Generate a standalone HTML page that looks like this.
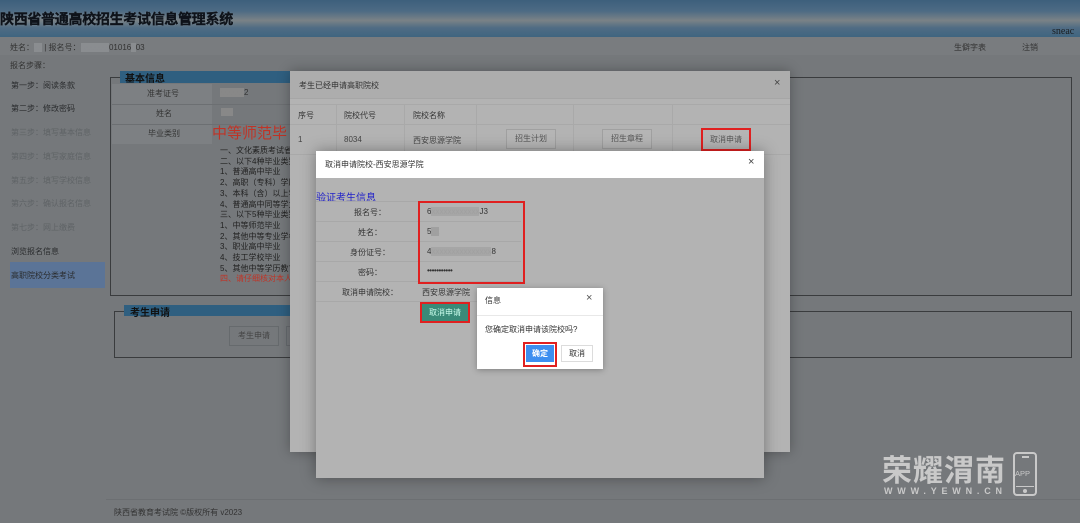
<!DOCTYPE html>
<html><head><meta charset="utf-8"><style>
*{margin:0;padding:0;box-sizing:border-box}
body{width:1080px;height:523px;overflow:hidden;background:#75787b;font-family:"Liberation Sans","Noto Sans CJK SC",sans-serif;font-size:8px;color:#222;position:relative}
.a{position:absolute;white-space:nowrap}
.hdr{left:0;top:0;width:1080px;height:37px;background:linear-gradient(#3d5f7c 0%,#4d6b84 30%,#7a8286 55%,#506c84 75%,#3f6580 100%)}
.side{left:11px;color:#2a2c2e;font-size:8px}
.side.dim{color:#5f6366}
.red{color:#c03326}
.m1{left:290px;top:71px;width:500px;height:381px;background:#b3b3b3;box-shadow:0 0 12px rgba(0,0,0,.3)}
.m2{left:316px;top:151px;width:448px;height:327px;background:#b3b3b3;box-shadow:0 0 14px rgba(0,0,0,.35)}
.btn{border:1px solid #a0a0a0;background:#b5b5b5;color:#555;font-size:8px;text-align:center}
.rb{border:2px solid #e02020}
</style></head><body>
<div class="a hdr"></div>
<div class="a" style="left:0;top:9px;font-size:14px;font-weight:bold;color:#0e131a;letter-spacing:-.3px;-webkit-text-stroke:0.4px #0e131a;text-shadow:0 0 1px #9ab"><span>陕西省普通高校招生考试信息管理系统</span></div>
<div class="a" style="left:1052px;top:26px;font-family:'Liberation Serif',serif;font-size:10px;color:#1a1d20">sneac</div>
<div class="a" style="left:0;top:37px;width:1080px;height:18px;background:#797c7f"></div>
<div class="a" style="left:10px;top:42px;color:#333">姓名：<span style="background:#8a8d90;color:#8a8d90">xx</span> | 报名号：<span style="background:#8a8d90;color:#8a8d90">6xxxxxx</span>01016<span style="background:#8a8d90;color:#8a8d90">0</span>03</div>
<div class="a" style="left:954px;top:42px;color:#333">生僻字表</div>
<div class="a" style="left:1022px;top:42px;color:#333">注销</div>
<div class="a" style="left:10px;top:60px;color:#333">报名步骤：</div>
<div class="a side" style="top:80px">第一步：阅读条款</div>
<div class="a side" style="top:103px">第二步：修改密码</div>
<div class="a side dim" style="top:127px">第三步：填写基本信息</div>
<div class="a side dim" style="top:151px">第四步：填写家庭信息</div>
<div class="a side dim" style="top:175px">第五步：填写学校信息</div>
<div class="a side dim" style="top:198px">第六步：确认报名信息</div>
<div class="a side dim" style="top:222px">第七步：网上缴费</div>
<div class="a side" style="top:246px">浏览报名信息</div>
<div class="a" style="left:10px;top:262px;width:95px;height:26px;background:#5b7497"></div>
<div class="a side" style="top:270px">高职院校分类考试</div>
<!-- fieldset 1 -->
<div class="a" style="left:110px;top:77px;width:962px;height:219px;border:1px solid #3a3c3e"></div>
<div class="a" style="left:120px;top:71px;width:170px;height:12px;background:#2f5f80"></div>
<div class="a" style="left:125px;top:70px;font-size:10px;font-weight:bold;color:#111">基本信息</div>
<div class="a" style="left:112px;top:84px;width:100px;height:60px;background:#7d8083"></div>
<div class="a" style="left:112px;top:104px;width:180px;height:1px;background:#6c6f72"></div>
<div class="a" style="left:112px;top:124px;width:180px;height:1px;background:#6c6f72"></div>
<div class="a" style="left:147px;top:88px;color:#333">准考证号</div>
<div class="a" style="left:156px;top:108px;color:#333">姓名</div>
<div class="a" style="left:148px;top:128px;color:#333">毕业类别</div>
<div class="a" style="left:220px;top:88px;color:#333"><span style="background:#888;color:#888">xxxxxx</span>2</div>
<div class="a" style="left:221px;top:108px;width:12px;height:8px;background:#888"></div>
<div class="a red" style="left:212px;top:122px;font-size:15px">中等师范毕</div>
<div class="a" style="left:220px;top:146px;line-height:10.7px;font-size:8px;color:#222">一、文化素质考试省级<br>二、以下4种毕业类别<br>1、普通高中毕业<br>2、高职（专科）学历<br>3、本科（含）以上学<br>4、普通高中同等学力<br>三、以下5种毕业类别<br>1、中等师范毕业<br>2、其他中等专业学校<br>3、职业高中毕业<br>4、技工学校毕业<br>5、其他中等学历教育<br><span class="red">四、请仔细核对本人毕</span></div>
<!-- fieldset 2 -->
<div class="a" style="left:114px;top:311px;width:958px;height:47px;border:1px solid #3a3c3e"></div>
<div class="a" style="left:124px;top:305px;width:166px;height:11px;background:#2f5f80"></div>
<div class="a" style="left:130px;top:304px;font-size:10px;font-weight:bold;color:#111">考生申请</div>
<div class="a" style="left:229px;top:326px;width:50px;height:20px;border:1px solid #666a6d;color:#444;text-align:center;line-height:18px">考生申请</div>
<div class="a" style="left:286px;top:326px;width:8px;height:20px;border:1px solid #666a6d"></div>
<div class="a" style="left:106px;top:499px;width:974px;height:1px;background:#6c6f72"></div>
<div class="a" style="left:114px;top:507px;color:#333">陕西省教育考试院 ©版权所有 v2023</div>
<!-- modal 1 -->
<div class="a m1">
 <div class="a" style="left:0;top:0;width:500px;height:28px;background:#adadad;border-bottom:1px solid #a6a6a6"></div>
 <div class="a" style="left:9px;top:9px;color:#333">考生已经申请高职院校</div>
 <div class="a" style="left:484px;top:6px;font-size:11px;color:#444">×</div>
 <div class="a" style="left:0;top:33px;width:500px;height:1px;background:#a9a9a9"></div>
 <div class="a" style="left:0;top:53px;width:500px;height:1px;background:#a9a9a9"></div>
 <div class="a" style="left:0;top:83px;width:500px;height:1px;background:#a9a9a9"></div>
 <div class="a" style="left:46px;top:33px;width:1px;height:50px;background:#a9a9a9"></div>
 <div class="a" style="left:114px;top:33px;width:1px;height:50px;background:#a9a9a9"></div>
 <div class="a" style="left:186px;top:33px;width:1px;height:50px;background:#a9a9a9"></div>
 <div class="a" style="left:283px;top:33px;width:1px;height:50px;background:#a9a9a9"></div>
 <div class="a" style="left:382px;top:33px;width:1px;height:50px;background:#a9a9a9"></div>
 <div class="a" style="left:8px;top:39px;color:#333">序号</div>
 <div class="a" style="left:54px;top:39px;color:#333">院校代号</div>
 <div class="a" style="left:123px;top:39px;color:#333">院校名称</div>
 <div class="a" style="left:8px;top:64px;color:#444">1</div>
 <div class="a" style="left:54px;top:64px;color:#444">8034</div>
 <div class="a" style="left:123px;top:64px;color:#444">西安思源学院</div>
 <div class="a btn" style="left:216px;top:58px;width:50px;height:20px;line-height:18px">招生计划</div>
 <div class="a btn" style="left:312px;top:58px;width:50px;height:20px;line-height:18px">招生章程</div>
 <div class="a btn rb" style="left:411px;top:57px;width:50px;height:23px;line-height:19px">取消申请</div>
</div>
<!-- modal 2 -->
<div class="a m2">
 <div class="a" style="left:0;top:0;width:448px;height:27px;background:#fff"></div>
 <div class="a" style="left:9px;top:8px;color:#333">取消申请院校-西安思源学院</div>
 <div class="a" style="left:432px;top:5px;font-size:11px;color:#444">×</div>
 <div class="a" style="left:0;top:38px;font-size:10px;color:#2323c8">验证考生信息</div>
 <div class="a" style="left:0;top:50px;width:205px;height:100px;border-top:1px solid #a8a8a8"></div>
 <div class="a" style="left:0;top:70px;width:205px;height:1px;background:#a8a8a8"></div>
 <div class="a" style="left:0;top:90px;width:205px;height:1px;background:#a8a8a8"></div>
 <div class="a" style="left:0;top:110px;width:205px;height:1px;background:#a8a8a8"></div>
 <div class="a" style="left:0;top:130px;width:205px;height:1px;background:#a8a8a8"></div>
 <div class="a" style="left:0;top:150px;width:205px;height:1px;background:#a8a8a8"></div>
 <div class="a" style="left:38px;top:56px;color:#333">报名号：</div>
 <div class="a" style="left:42px;top:76px;color:#333">姓名：</div>
 <div class="a" style="left:34px;top:96px;color:#333">身份证号：</div>
 <div class="a" style="left:42px;top:116px;color:#333">密码：</div>
 <div class="a" style="left:26px;top:136px;color:#333">取消申请院校：</div>
 <div class="a rb" style="left:102px;top:50px;width:107px;height:83px"></div>
 <div class="a" style="left:111px;top:56px;color:#333">6<span style="color:#a0a0a0;background:#a6a6a6">xxxxxxxxxxxx</span>J3</div>
 <div class="a" style="left:111px;top:76px;color:#333">5<span style="background:#a0a0a0;color:#a0a0a0">xx</span></div>
 <div class="a" style="left:111px;top:96px;color:#333">4<span style="color:#a0a0a0;background:#a6a6a6">xxxxxxxxxxxxxxx</span>8</div>
 <div class="a" style="left:111px;top:115px;color:#333;letter-spacing:-.5px">•••••••••••</div>
 <div class="a" style="left:106px;top:136px;color:#333">西安思源学院</div>
 <div class="a rb" style="left:104px;top:151px;width:50px;height:21px;background:#3a8a78;color:#cfe;text-align:center;line-height:17px">取消申请</div>
</div>
<!-- modal 3 -->
<div class="a" style="left:477px;top:288px;width:126px;height:81px;background:#fff;box-shadow:0 1px 6px rgba(0,0,0,.3)">
 <div class="a" style="left:8px;top:7px;color:#333">信息</div>
 <div class="a" style="left:109px;top:4px;font-size:11px;color:#555">×</div>
 <div class="a" style="left:0;top:27px;width:126px;height:1px;background:#e8e8e8"></div>
 <div class="a" style="left:8px;top:36px;color:#333">您确定取消申请该院校吗?</div>
 <div class="a rb" style="left:46px;top:54px;width:34px;height:25px"></div>
 <div class="a" style="left:49px;top:57px;width:28px;height:17px;background:#3d8ef0;color:#fff;font-weight:bold;text-align:center;line-height:17px">确定</div>
 <div class="a" style="left:84px;top:57px;width:32px;height:17px;border:1px solid #dcdcdc;color:#333;text-align:center;line-height:15px">取消</div>
</div>
<!-- watermark -->
<div class="a" style="left:882px;top:446px;font-size:30px;font-weight:bold;color:#c9c9c9;letter-spacing:1px">荣耀渭南</div>
<div class="a" style="left:884px;top:486px;font-size:9px;font-weight:bold;color:#c9c9c9;letter-spacing:4.8px">WWW.YEWN.CN</div>
<div class="a" style="left:1013px;top:452px;width:24px;height:44px;border:2px solid #c9c9c9;border-radius:4px"></div>
<div class="a" style="left:1022px;top:456px;width:7px;height:2px;background:#c9c9c9"></div>
<div class="a" style="left:1016px;top:486px;width:18px;height:1px;background:#c9c9c9"></div>
<div class="a" style="left:1023px;top:489px;width:4px;height:4px;background:#c9c9c9;border-radius:2px"></div>
<div class="a" style="left:1015px;top:469px;font-size:7.5px;color:#c9c9c9">APP</div>
</body></html>
